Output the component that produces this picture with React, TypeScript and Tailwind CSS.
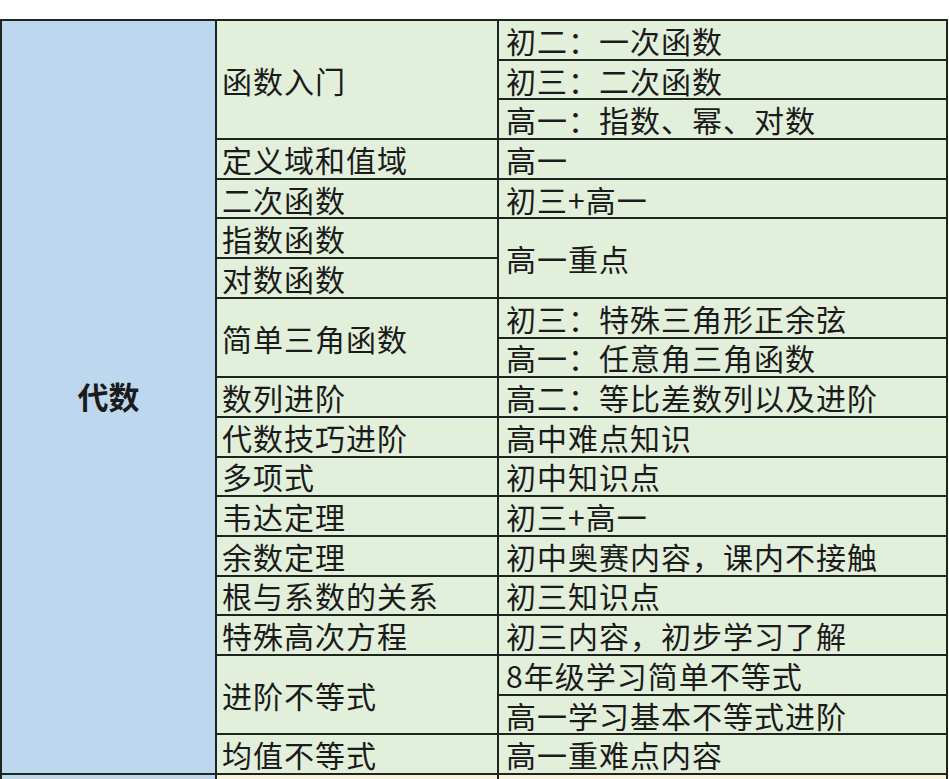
const topics: { name: string; span?: number; notes: { text: string; span?: number }[] }[] = [
  { name: '函数入门', span: 3, notes: [{ text: '初二：一次函数' }, { text: '初三：二次函数' }, { text: '高一：指数、幂、对数' }] },
  { name: '定义域和值域', notes: [{ text: '高一' }] },
  { name: '二次函数', notes: [{ text: '初三+高一' }] },
  { name: '指数函数', notes: [{ text: '高一重点', span: 2 }] },
  { name: '对数函数', notes: [] },
  { name: '简单三角函数', span: 2, notes: [{ text: '初三：特殊三角形正余弦' }, { text: '高一：任意角三角函数' }] },
  { name: '数列进阶', notes: [{ text: '高二：等比差数列以及进阶' }] },
  { name: '代数技巧进阶', notes: [{ text: '高中难点知识' }] },
  { name: '多项式', notes: [{ text: '初中知识点' }] },
  { name: '韦达定理', notes: [{ text: '初三+高一' }] },
  { name: '余数定理', notes: [{ text: '初中奥赛内容，课内不接触' }] },
  { name: '根与系数的关系', notes: [{ text: '初三知识点' }] },
  { name: '特殊高次方程', notes: [{ text: '初三内容，初步学习了解' }] },
  { name: '进阶不等式', span: 2, notes: [{ text: '8年级学习简单不等式' }, { text: '高一学习基本不等式进阶' }] },
  { name: '均值不等式', notes: [{ text: '高一重难点内容' }] },
];

const rowSpan: Record<number, string> = { 1: 'row-span-1', 2: 'row-span-2', 3: 'row-span-3' };

export default function App() {
  // flatten in row order so grid auto-placement fills col 2 / col 3 correctly
  const cells: { key: string; text: string; span: number; col: 2 | 3 }[] = [];
  topics.forEach((t, i) => {
    cells.push({ key: `t${i}`, text: t.name, span: t.span ?? 1, col: 2 });
    t.notes.forEach((n, j) => cells.push({ key: `n${i}-${j}`, text: n.text, span: n.span ?? 1, col: 3 }));
  });

  return (
    <div
      className="min-h-screen bg-white pt-[19px] text-[#1b1b1b]"
      style={{ fontFamily: '"Noto Sans CJK SC", "Noto Sans", sans-serif' }}
    >
      <div className="grid w-[948px] grid-cols-[213px_280px_447px] grid-rows-[repeat(19,37.7px)_40px] gap-[2px] bg-[#1e241e] p-[2px] pb-0">
        <div className="row-span-19 flex items-center justify-center bg-[#bdd7ee] pb-[2px] text-[31px] font-bold">
          代数
        </div>
        {cells.map((c) => (
          <div
            key={c.key}
            className={`${rowSpan[c.span]} ${c.col === 2 ? 'col-start-2 pl-[5px]' : 'col-start-3 pl-[7px]'} flex items-center bg-[#e2efda] text-[30px] leading-none tracking-[1px] whitespace-nowrap`}
          >
            {c.text}
          </div>
        ))}
        <div className="bg-[#bdd7ee]" />
        <div className="bg-[#fcf1da]" />
        <div className="bg-[#fcf1da]" />
      </div>
    </div>
  );
}
